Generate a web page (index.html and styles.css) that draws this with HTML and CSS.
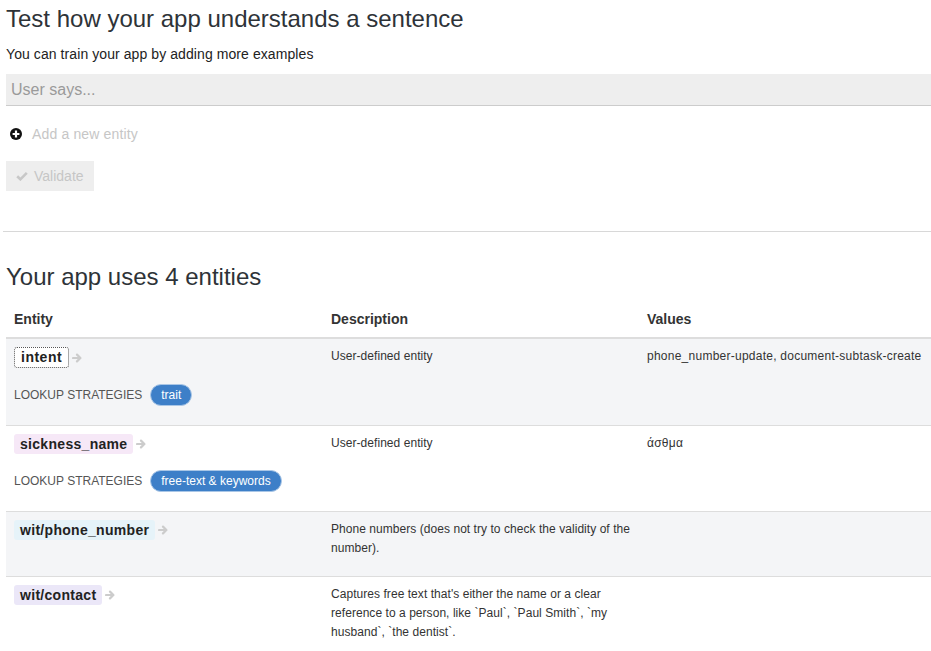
FILE: index.html
```html
<!DOCTYPE html>
<html lang="en">
<head>
<meta charset="utf-8">
<title>Test your app</title>
<link rel="stylesheet" href="styles.css">
</head>
<body>
<div class="page">
  <h1 class="title">Test how your app understands a sentence</h1>
  <p class="sub">You can train your app by adding more examples</p>
  <input class="says" type="text" placeholder="User says...">
  <div class="add-entity">
    <svg class="plus" width="12" height="12" viewBox="0 0 12 12"><circle cx="6" cy="6" r="6" fill="#111"/><path d="M6 2.6v6.8M2.6 6h6.8" stroke="#fff" stroke-width="2.2"/></svg>
    <span>Add a new entity</span>
  </div>
  <div class="btn-row">
    <span class="btn"><svg class="check" width="12" height="10" viewBox="0 0 12 10"><path d="M1.2 5.2 L4.4 8.3 L10.8 1.8" fill="none" stroke="#c8c8c8" stroke-width="2.6"/></svg>Validate</span>
  </div>
  <hr class="sep">
  <h2 class="title">Your app uses 4 entities</h2>
  <table class="entities">
    <thead>
      <tr><th class="c1">Entity</th><th class="c2">Description</th><th>Values</th></tr>
    </thead>
    <tbody>
      <tr class="alt">
        <td>
          <div class="ent"><span class="chip chip-intent">intent</span><svg class="arrow" width="10" height="10" viewBox="0 0 10 10"><path d="M1 5h7M5 1.6 8.4 5 5 8.4" fill="none" stroke="#ccc" stroke-width="2.2" stroke-linecap="round" stroke-linejoin="round"/></svg></div>
          <div class="lookup"><span class="lk">LOOKUP STRATEGIES</span><span class="pill">trait</span></div>
        </td>
        <td><p class="desc">User-defined entity</p></td>
        <td><p class="desc vals">phone_number-update, document-subtask-create</p></td>
      </tr>
      <tr>
        <td>
          <div class="ent"><span class="chip chip-pink">sickness_name</span><svg class="arrow" width="10" height="10" viewBox="0 0 10 10"><path d="M1 5h7M5 1.6 8.4 5 5 8.4" fill="none" stroke="#ccc" stroke-width="2.2" stroke-linecap="round" stroke-linejoin="round"/></svg></div>
          <div class="lookup"><span class="lk">LOOKUP STRATEGIES</span><span class="pill">free-text &amp; keywords</span></div>
        </td>
        <td><p class="desc">User-defined entity</p></td>
        <td><p class="desc vals">άσθμα</p></td>
      </tr>
      <tr class="alt">
        <td>
          <div class="ent"><span class="chip chip-blue">wit/phone_number</span><svg class="arrow" width="10" height="10" viewBox="0 0 10 10"><path d="M1 5h7M5 1.6 8.4 5 5 8.4" fill="none" stroke="#ccc" stroke-width="2.2" stroke-linecap="round" stroke-linejoin="round"/></svg></div>
        </td>
        <td><p class="desc">Phone numbers (does not try to check the validity of the number).</p></td>
        <td></td>
      </tr>
      <tr>
        <td>
          <div class="ent"><span class="chip chip-lav">wit/contact</span><svg class="arrow" width="10" height="10" viewBox="0 0 10 10"><path d="M1 5h7M5 1.6 8.4 5 5 8.4" fill="none" stroke="#ccc" stroke-width="2.2" stroke-linecap="round" stroke-linejoin="round"/></svg></div>
        </td>
        <td><p class="desc">Captures free text that's either the name or a clear reference to a person, like `Paul`, `Paul Smith`, `my husband`, `the dentist`.</p></td>
        <td></td>
      </tr>
    </tbody>
  </table>
</div>
</body>
</html>
```
FILE: styles.css
```css
html, body {
  margin: 0;
  padding: 0;
  background: #fff;
}
body {
  font-family: "Liberation Sans", Arial, Helvetica, sans-serif;
  color: #333;
  font-size: 14px;
  line-height: 20px;
}
.page {
  padding-left: 6px;
}
.title {
  font-size: 24px;
  line-height: 26px;
  font-weight: normal;
  color: #2e3338;
  margin: 6px 0 0;
}
.sub {
  margin: 12px 0 10px;
  font-size: 14px;
  line-height: 20px;
  color: #222;
  letter-spacing: 0.08px;
}
.says {
  display: block;
  width: 100%;
  box-sizing: border-box;
  height: 32px;
  margin: 0;
  padding: 0 5px;
  border: 0;
  border-bottom: 1px solid #ccc;
  background: #eee;
  font-family: "Liberation Sans", Arial, sans-serif;
  font-size: 16px;
  color: #333;
  outline: none;
}
.says::placeholder {
  color: #9a9a9a;
}
.add-entity {
  margin-top: 18px;
  display: flex;
  align-items: center;
  height: 20px;
  color: #c6c6c6;
  letter-spacing: 0.15px;
}
.plus {
  margin-left: 4px;
  margin-right: 10px;
  display: block;
}
.btn-row {
  margin-top: 17px;
}
.btn {
  display: inline-flex;
  align-items: center;
  height: 30px;
  box-sizing: border-box;
  padding: 5px 10px 5px 10px;
  background: #eee;
  color: #c6c6c6;
  font-size: 14px;
}
.check {
  margin-right: 6px;
  display: block;
}
.sep {
  border: 0;
  border-top: 1px solid #d8d8d8;
  height: 0;
  margin: 40px 0 0 -3px;
}
h2.title {
  margin-top: 32px;
}
.entities {
  width: 100%;
  margin-top: 11px;
  border-collapse: separate;
  border-spacing: 0;
}
.entities th {
  text-align: left;
  padding: 8px;
  font-size: 14px;
  line-height: 20px;
  font-weight: bold;
  color: #333;
  border-bottom: 2px solid #ddd;
}
.entities th.c1 { width: 301px; }
.entities th.c2 { width: 300px; }
.entities td {
  padding: 8px;
  vertical-align: top;
  border-bottom: 1px solid #ddd;
}
.entities tr.alt td {
  background: #f4f5f7;
}
.desc {
  margin: 0 0 10px;
  font-size: 12px;
  line-height: 19px;
  color: #333;
  letter-spacing: 0.05px;
}
.vals {
  letter-spacing: 0.25px;
}
.ent {
  display: flex;
  align-items: center;
  margin-bottom: 16px;
}
.chip {
  display: inline-block;
  font-size: 14px;
  font-weight: bold;
  line-height: 16px;
  padding: 2px 6px;
  border-radius: 3px;
  color: #222;
  letter-spacing: 0.3px;
}
.chip-intent {
  padding: 1px 6px 2px;
  border: 1px dotted #555;
  background: #fff;
  letter-spacing: 0.5px;
}
.chip-pink { background: #f6e8f7; }
.chip-blue { background: #e6f3f9; }
.chip-lav { background: #ebe7f8; }
.arrow {
  display: block;
  margin-left: 3px;
}
.lookup {
  display: flex;
  align-items: center;
  height: 22px;
  margin-bottom: 11px;
}
.lk {
  font-size: 12px;
  color: #555;
  margin-right: 8px;
}
.pill {
  display: inline-block;
  font-size: 12px;
  line-height: 16px;
  padding: 2px 10px;
  border: 1px solid #a9c6e6;
  border-radius: 11px;
  background: #3d7fc8;
  color: #fff;
}
```
